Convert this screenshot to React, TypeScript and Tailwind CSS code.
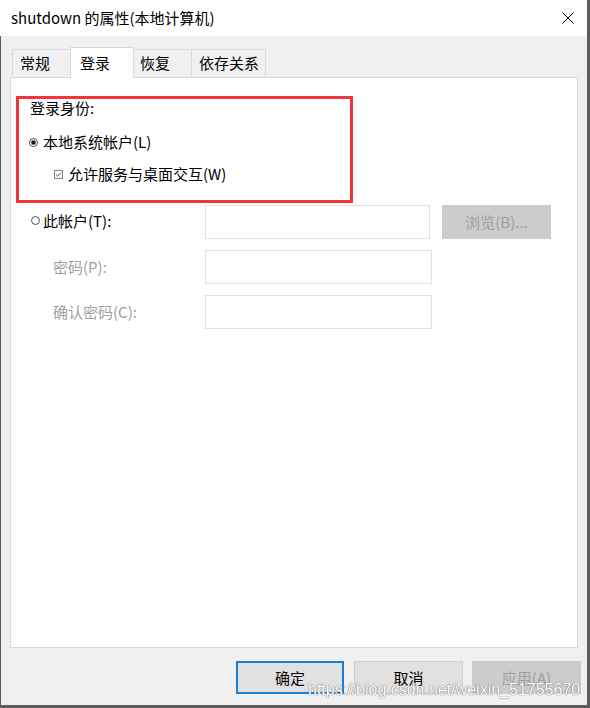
export default function App() {
  const cjk = "font-['Noto_Sans_CJK_SC','Noto_Sans',sans-serif]";
  return (
    <div className={`relative h-[708px] w-[590px] overflow-hidden bg-[#5c5c5c] ${cjk}`}>
      {/* title bar */}
      <div className="flex h-[36px] w-[587px] items-center justify-between bg-white pl-[11px] pr-[13px]">
        <span className="text-[15px] leading-[20px] text-black">shutdown 的属性(本地计算机)</span>
        <svg width="12" height="12" viewBox="0 0 12 12">
          <path d="M0.5 0.5L11.5 11.5M11.5 0.5L0.5 11.5" stroke="#000" strokeWidth="1" fill="none" />
        </svg>
      </div>

      {/* body */}
      <div className="ml-px flex h-[669px] w-[586px] flex-col bg-[#f0f0f0] pt-[11px]">
        {/* tabs */}
        <div className="relative z-10 ml-[11px] flex h-[31px] items-end text-[15px] leading-[20px] text-black">
          <div className="mb-px flex h-[28px] w-[58px] items-center border-l border-t border-[#d9d9d9] bg-[#f0f0f0] pb-[1px] pl-[7px]">常规</div>
          <div className="flex h-[31px] w-[64px] items-center border-l border-r border-t border-[#d9d9d9] bg-white pl-[9px]">登录</div>
          <div className="mb-px flex h-[28px] w-[58px] items-center border-r border-t border-[#d9d9d9] bg-[#f0f0f0] pb-[1px] pl-[6px]">恢复</div>
          <div className="mb-px flex h-[28px] w-[74px] items-center border-r border-t border-[#d9d9d9] bg-[#f0f0f0] pb-[1px] pl-[7px]">依存关系</div>
        </div>

        {/* panel */}
        <div className="-mt-px ml-[9px] flex h-[571px] w-[568px] flex-col border border-[#d9d9d9] bg-white text-[15px] leading-[18px]">
          {/* red box */}
          <div className="ml-[5px] mt-[18px] flex h-[107px] w-[337px] flex-col border-[3px] border-[#f2353b]">
            <div className="pl-[11px] text-black">登录身份:</div>
            <div className="mt-[16px] flex items-center text-black">
              <svg className="ml-[10px]" width="9" height="9" viewBox="0 0 9 9">
                <circle cx="4.5" cy="4.5" r="4" fill="#fff" stroke="#333" strokeWidth="0.9" />
                <circle cx="4.5" cy="4.5" r="2.3" fill="#1a1a1a" />
              </svg>
              <span className="ml-[5px]">本地系统帐户(L)</span>
            </div>
            <div className="mt-[14px] flex items-center text-black">
              <svg className="ml-[35px]" width="9" height="9" viewBox="0 0 9 9">
                <rect x="0.5" y="0.5" width="8" height="8" fill="#fff" stroke="#777" strokeWidth="0.9" />
                <path d="M2 4.6L3.8 6.3L7 2.6" fill="none" stroke="#444" strokeWidth="0.9" />
              </svg>
              <span className="ml-[5px]">允许服务与桌面交互(W)</span>
            </div>
          </div>

          {/* this account */}
          <div className="mt-[2px] flex items-center">
            <div className="flex w-[194px] items-center pb-[3px] text-black">
              <svg className="ml-[20px]" width="9" height="9" viewBox="0 0 9 9">
                <circle cx="4.5" cy="4.5" r="4" fill="#fff" stroke="#444" strokeWidth="0.9" />
              </svg>
              <span className="ml-[3px]">此帐户(T):</span>
            </div>
            <div className="h-[34px] w-[225px] border border-[#e0e0e0] bg-white" />
            <div className="ml-[12px] flex h-[34px] w-[109px] items-center justify-center bg-[#cccccc] text-[#9e9e9e]">
              浏览(B)...
            </div>
          </div>

          <div className="mt-[11px] flex items-center">
            <div className="w-[194px] pl-[42px] text-[#a0a0a0]">密码(P):</div>
            <div className="h-[34px] w-[227px] border border-[#e0e0e0] bg-white" />
          </div>

          <div className="mt-[11px] flex items-center">
            <div className="w-[194px] pl-[42px] text-[#a0a0a0]">确认密码(C):</div>
            <div className="h-[34px] w-[227px] border border-[#e0e0e0] bg-white" />
          </div>
        </div>

        {/* bottom buttons */}
        <div className="ml-[235px] mt-[13px] flex text-[15px] leading-[18px]">
          <div className="flex h-[33px] w-[108px] items-center justify-center border-2 border-[#1a7fd6] bg-[#e1e1e1] text-black">确定</div>
          <div className="ml-[10px] flex h-[33px] w-[109px] items-center justify-center border border-[#cfcfcf] bg-[#e1e1e1] text-black">取消</div>
          <div className="ml-[9px] flex h-[33px] w-[109px] items-center justify-center bg-[#cccccc] text-[#a0a0a0]">应用(A)</div>
        </div>
      </div>

      {/* watermark */}
      <div className="absolute left-[308px] top-[680px] font-['Liberation_Sans',Arial,sans-serif] text-[16px] leading-[20px] text-white [text-shadow:0_0_1px_#6f6f6f,0_0_1px_#6f6f6f]">
        https://blog.csdn.net/weixin_51755670
      </div>
    </div>
  );
}
